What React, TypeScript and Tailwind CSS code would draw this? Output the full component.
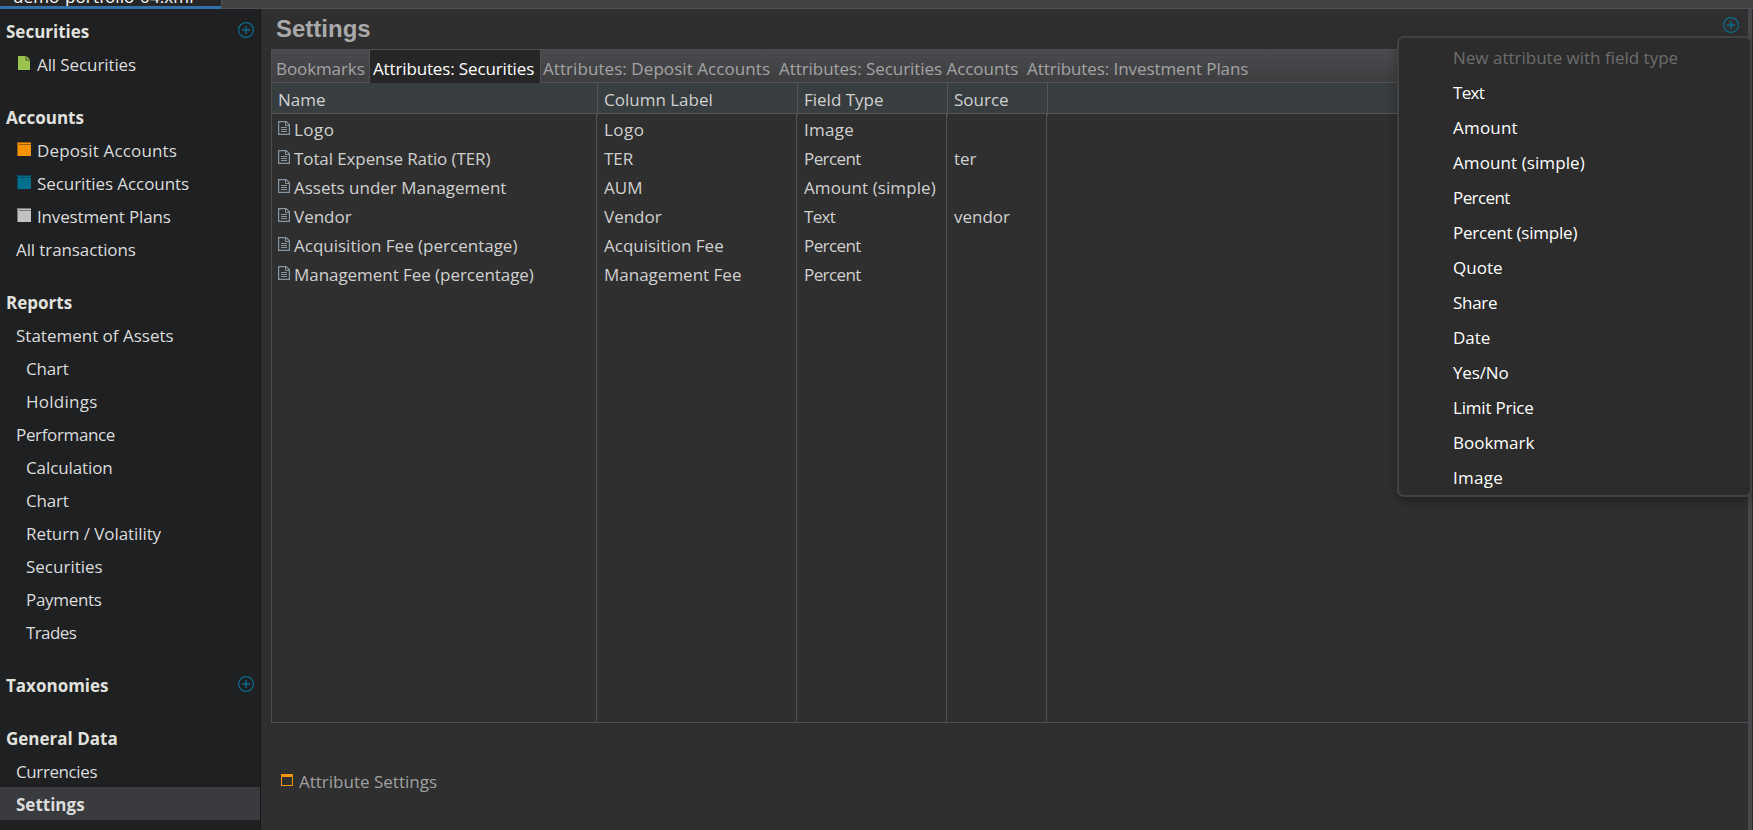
import React from "react";

type Icon = "doc" | "orange" | "blue" | "gray";
type Item = { label: string; level: 0 | 1 | 2; icon?: Icon; add?: boolean; gap?: boolean; active?: boolean };

const nav: Item[] = [
  { label: "Securities", level: 0, add: true },
  { label: "All Securities", level: 1, icon: "doc" },
  { label: "Accounts", level: 0, gap: true },
  { label: "Deposit Accounts", level: 1, icon: "orange" },
  { label: "Securities Accounts", level: 1, icon: "blue" },
  { label: "Investment Plans", level: 1, icon: "gray" },
  { label: "All transactions", level: 1 },
  { label: "Reports", level: 0, gap: true },
  { label: "Statement of Assets", level: 1 },
  { label: "Chart", level: 2 },
  { label: "Holdings", level: 2 },
  { label: "Performance", level: 1 },
  { label: "Calculation", level: 2 },
  { label: "Chart", level: 2 },
  { label: "Return / Volatility", level: 2 },
  { label: "Securities", level: 2 },
  { label: "Payments", level: 2 },
  { label: "Trades", level: 2 },
  { label: "Taxonomies", level: 0, gap: true, add: true },
  { label: "General Data", level: 0, gap: true },
  { label: "Currencies", level: 1 },
  { label: "Settings", level: 1, active: true },
];

const rows = [
  ["Logo", "Logo", "Image", ""],
  ["Total Expense Ratio (TER)", "TER", "Percent", "ter"],
  ["Assets under Management", "AUM", "Amount (simple)", ""],
  ["Vendor", "Vendor", "Text", "vendor"],
  ["Acquisition Fee (percentage)", "Acquisition Fee", "Percent", ""],
  ["Management Fee (percentage)", "Management Fee", "Percent", ""],
];

const menu = ["Text", "Amount", "Amount (simple)", "Percent", "Percent (simple)", "Quote", "Share", "Date", "Yes/No", "Limit Price", "Bookmark", "Image"];

const tracking: Record<string, string> = {
  "All Securities": "tracking-[-0.1px]",
  "Deposit Accounts": "tracking-[0.15px]",
  "Securities Accounts": "tracking-[-0.07px]",
  "Investment Plans": "tracking-[-0.15px]",
  "All transactions": "tracking-[-0.1px]",
  "Chart": "tracking-[-0.2px]",
  "Holdings": "tracking-[0.25px]",
  "Performance": "tracking-[-0.35px]",
  "Calculation": "tracking-[-0.1px]",
  "Return / Volatility": "tracking-[-0.08px]",
  "Payments": "tracking-[-0.3px]",
  "Trades": "tracking-[-0.6px]",
  "Currencies": "tracking-[-0.4px]",
  "Percent": "tracking-[-0.6px]",
  "Percent (simple)": "tracking-[-0.22px]",
  "Text": "tracking-[-0.7px]",
  "Logo": "tracking-[0.5px]",
  "Image": "tracking-[0.25px]",
  "Amount": "tracking-[0.2px]",
  "Amount (simple)": "tracking-[0.09px]",
  "Share": "tracking-[-0.3px]",
  "Yes/No": "tracking-[-0.15px]",
  "Limit Price": "tracking-[-0.2px]",
  "Total Expense Ratio (TER)": "tracking-[-0.1px]",
  "Management Fee (percentage)": "tracking-[-0.05px]",
};

function Label({ text }: { text: string }) {
  return <span className={tracking[text] ?? ""}>{text}</span>;
}

function Plus() {
  return (
    <svg width="16" height="16" viewBox="0 0 16 16" fill="none" stroke="#0d6b8c" className="block shrink-0">
      <circle cx="8" cy="8" r="7.4" strokeWidth="1.2" />
      <path d="M8 4v8M4 8h8" strokeWidth="1.4" />
    </svg>
  );
}

function DocIcon() {
  return (
    <svg width="12" height="14" viewBox="0 0 12 14" className="block shrink-0">
      <path d="M0 0h8.5L12 3.5V14H0z" fill="#9bc24f" />
      <path d="M8 0v4h4" fill="none" stroke="#3d5225" />
      <path d="M9 0l3 3V0z" fill="#1e2022" />
    </svg>
  );
}

function Book({ kind }: { kind: Icon }) {
  const c = kind === "orange" ? ["#f59300", "#9c5f06"] : kind === "blue" ? ["#00708f", "#054a60"] : ["#c3c3c3", "#777777"];
  return (
    <svg width="14" height="14" viewBox="0 0 14 14" className="block shrink-0">
      <path d="M0 0h14v14H0z" fill={c[0]} />
      <path d="M.5 14V.5H14M2 2.5h12" fill="none" stroke={c[1]} />
    </svg>
  );
}

function FileIcon() {
  return (
    <svg width="12" height="14" viewBox="0 0 12 14" fill="none" stroke="#8796a3" className="block shrink-0">
      <path d="M.6.6h7.6l3.2 3.2v9.6H.6z" strokeWidth="1.2" />
      <path d="M7.5.8v3.7h4" />
      <path d="M3 6.5h6M3 8.5h6M3 10.5h6" />
    </svg>
  );
}

export default function App() {
  return (
    <div className="relative flex h-[830px] w-[1753px] flex-col overflow-hidden bg-[#2f2f2f] font-['Open_Sans','Noto_Sans',sans-serif] text-[17px] whitespace-nowrap">
      <div className="flex h-[9px] shrink-0 overflow-hidden">
        <div className="flex h-[9px] w-[221px] items-end overflow-hidden border-b-[3px] border-[#3470aa] bg-[#262626] pl-[13px] text-white">
          <span className="-mb-[3px] leading-6 tracking-[0.12px]">demo-portfolio-04.xml</span>
        </div>
        <div className="flex-1 border-b border-l border-[#4f5054] bg-[#434346]" />
      </div>
      <div className="flex min-h-0 flex-1">
        <aside className="w-[261px] shrink-0 border-r border-[#151617] bg-[#1e2022] pt-[5px] text-[#dcdcdc]">
          {nav.map((n, i) => (
            <div
              key={i}
              className={`flex h-[33px] items-center ${n.gap ? "mt-5" : ""} ${n.level === 0 ? "pl-1.5 font-bold text-[#e1e1de]" : n.level === 1 ? "pl-4" : "pl-[26px]"} ${n.active ? "bg-[#3a3b3f] font-bold" : ""}`}
            >
              {n.icon && (
                <span className={`-mt-px ${n.icon === "doc" ? "mr-[7px] ml-0.5" : "ml-px mr-1.5"}`}>
                  {n.icon === "doc" ? <DocIcon /> : <Book kind={n.icon} />}
                </span>
              )}
              <span className="pt-[2px] leading-[31px]"><Label text={n.label} /></span>
              {n.add && <span className="mr-1.5 -mt-[1px] ml-auto"><Plus /></span>}
            </div>
          ))}
        </aside>
        <main className="flex min-w-0 flex-1 flex-col pl-2.5">
          <div className="flex h-10 shrink-0 justify-between pr-[9px]">
            <h1 className="pl-[5px] font-['Liberation_Sans',sans-serif] text-[24px] leading-10 font-bold text-[#a9a9a9]">Settings</h1>
            <span className="pt-2"><Plus /></span>
          </div>
          <div className="flex h-[674px] w-[1478px] shrink-0 flex-col border border-[#4c4e50]">
            <div className="flex h-[33px] shrink-0 border-b border-[#505154] bg-linear-to-b from-[#4a4b4f] to-[#3e3e40] leading-[37px] text-[#a3a3a3]">
              <span className="w-[98px] border-r border-[#505154] pl-1 tracking-[-0.1px]">Bookmarks</span>
              <span className="-mb-px h-[33px] w-[171px] border-r border-[#505154] bg-[#262626] pl-[3px] tracking-[-0.14px] text-white">Attributes: Securities</span>
              <span className="w-[236px] pl-[2px] tracking-[0.07px]">Attributes: Deposit Accounts</span>
              <span className="w-[248px] pl-[2px] tracking-[-0.05px]">Attributes: Securities Accounts</span>
              <span className="pl-[2px] tracking-[-0.08px]">Attributes: Investment Plans</span>
            </div>
            <div className="grid h-[31px] shrink-0 grid-cols-[326px_200px_150px_100px_1fr] border-b border-[#53575a] bg-[#383d3f] leading-[33px] text-[#d0d0d0]">
              <span className="border-r border-[#53575a] pl-1.5">Name</span>
              <span className="border-r border-[#53575a] pl-1.5">Column Label</span>
              <span className="border-r border-[#53575a] pl-1.5">Field Type</span>
              <span className="border-r border-[#53575a] pl-1.5">Source</span>
            </div>
            <div className="grid flex-1 grid-cols-[325px_200px_150px_100px_1fr] text-[#cfcfcf]">
              {[0, 1, 2, 3].map((c) => (
                <div key={c} className={`border-r border-[#4d5256] ${c ? "pl-[7px]" : "pl-1.5"}`}>
                  {rows.map((r, i) => (
                    <div key={i} className="flex h-[29px] items-center">
                      {c === 0 && <span className="-mt-px mr-1"><FileIcon /></span>}
                      <span className="pt-[2px] leading-[27px]"><Label text={r[c]} /></span>
                    </div>
                  ))}
                </div>
              ))}
            </div>
          </div>
          <div className="mt-[43px] flex h-8 items-center pl-[10px] text-[#a0a0a0]">
            <span className="mr-1.5 -mt-1 h-3 w-3 border border-t-[3px] border-[#f59300]" />
            <span>Attribute Settings</span>
          </div>
        </main>
        <div className="w-[5px] shrink-0 border-r border-[#2b2b2d] bg-[#47484c]" />
      </div>
      <div className="absolute top-9 left-[1397px] h-[461px] w-[355px] rounded-[7px] border-2 border-[#424242] bg-[#2c2c2c] pt-[2px] pl-[54px] leading-[35px] text-white shadow-[0_4px_12px_rgba(0,0,0,0.3)]">
        <div className="h-[35px] text-[#6d6d6d]">New attribute with field type</div>
        {menu.map((m) => (
          <div key={m} className="h-[35px]"><Label text={m} /></div>
        ))}
      </div>
    </div>
  );
}
